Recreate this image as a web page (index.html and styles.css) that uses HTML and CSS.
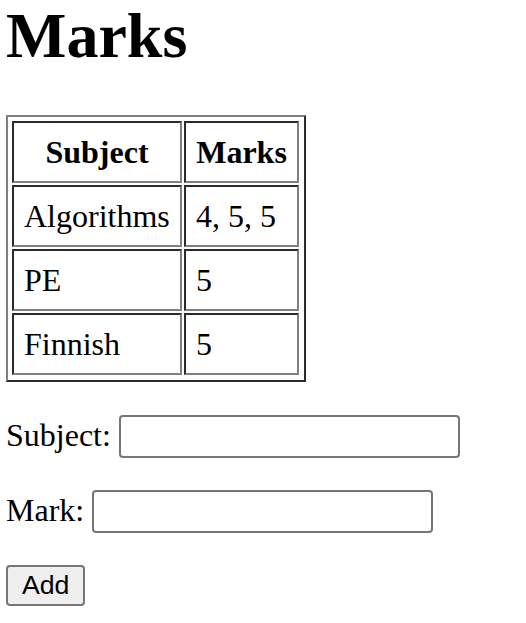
FILE: index.html
```html
<!DOCTYPE html>
<html>
<head>
<meta charset="utf-8">
<title>Marks</title>
<link rel="stylesheet" href="styles.css">
</head>
<body>
<h1 class="title">Marks</h1>
<table class="marks">
  <thead>
    <tr><th class="col-subject">Subject</th><th class="col-marks">Marks</th></tr>
  </thead>
  <tbody>
    <tr><td>Algorithms</td><td>4, 5, 5</td></tr>
    <tr><td>PE</td><td>5</td></tr>
    <tr><td>Finnish</td><td>5</td></tr>
  </tbody>
</table>
<form class="form">
  <div class="row"><label class="label" for="subject">Subject:</label><input class="field" id="subject" type="text"></div>
  <div class="row"><label class="label" for="mark">Mark:</label><input class="field" id="mark" type="text"></div>
  <div class="row"><button class="btn" type="button">Add</button></div>
</form>
</body>
</html>
```
FILE: styles.css
```css
html, body {
  background: #ffffff;
}
body {
  margin: 0 6px;
  font-family: "Liberation Serif", "Times New Roman", serif;
  font-size: 32px;
  color: #000;
}
.title {
  margin: 0 0 43px 0;
  font-size: 64px;
  line-height: 72px;
  font-weight: bold;
}
.marks {
  border-width: 2px;
  border-style: solid;
  border-color: #808080 #2b2b2b #2b2b2b #808080;
  border-spacing: 2px;
  padding: 2px 3px 3px 2px;
  margin: 0;
}
.marks th,
.marks td {
  border: 2px solid;
  border-color: #2b2b2b #808080 #808080 #2b2b2b;
  padding: 10px;
  line-height: 38px;
  font-size: 32px;
  text-align: left;
}
.marks th {
  text-align: center;
  font-weight: bold;
}
.col-subject { width: 146px; }
.col-marks { width: 91px; }
.form {
  margin: 33px 0 0 0;
}
.row {
  display: flex;
  align-items: center;
  gap: 8px;
  margin: 0 0 32px 0;
}
.label {
  margin-bottom: 2px;
  line-height: 37px;
}
.field {
  box-sizing: border-box;
  width: 341px;
  height: 43px;
  border: 2px solid #767676;
  border-radius: 4px;
  background: #fff;
  padding: 2px 4px;
  margin: 0;
  font-size: 26px;
}
.btn {
  box-sizing: border-box;
  height: 41px;
  padding: 3px 14px;
  margin: 0;
  border: 2px solid #767676;
  border-radius: 4px;
  background: #efefef;
  color: #000;
  font-family: "Liberation Sans", Arial, sans-serif;
  font-size: 26.67px;
  line-height: 31px;
}
```
